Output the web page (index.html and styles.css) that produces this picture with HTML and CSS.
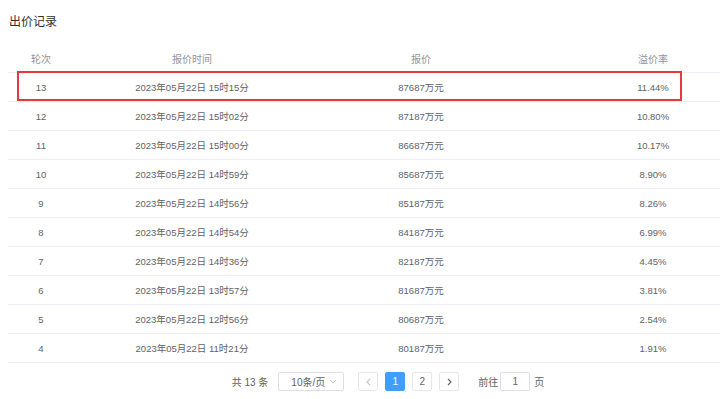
FILE: index.html
```html
<!DOCTYPE html>
<html lang="zh-CN">
<head>
    <meta charset="UTF-8">
    <title>出价记录</title>
    <link rel="stylesheet" href="styles.css">
</head>
<body>
    <div class="page">
        <h3 class="title">出价记录</h3>

        <div class="table-wrap">
            <table class="bid-table">
                <colgroup>
                    <col class="c-round">
                    <col class="c-time">
                    <col class="c-price">
                    <col class="c-rate">
                </colgroup>
                <thead>
                    <tr><th>轮次</th><th>报价时间</th><th>报价</th><th>溢价率</th></tr>
                </thead>
                <tbody>
                    <tr><td>13</td><td>2023年05月22日 15时15分</td><td>87687万元</td><td>11.44%</td></tr>
                    <tr><td>12</td><td>2023年05月22日 15时02分</td><td>87187万元</td><td>10.80%</td></tr>
                    <tr><td>11</td><td>2023年05月22日 15时00分</td><td>86687万元</td><td>10.17%</td></tr>
                    <tr><td>10</td><td>2023年05月22日 14时59分</td><td>85687万元</td><td>8.90%</td></tr>
                    <tr><td>9</td><td>2023年05月22日 14时56分</td><td>85187万元</td><td>8.26%</td></tr>
                    <tr><td>8</td><td>2023年05月22日 14时54分</td><td>84187万元</td><td>6.99%</td></tr>
                    <tr><td>7</td><td>2023年05月22日 14时36分</td><td>82187万元</td><td>4.45%</td></tr>
                    <tr><td>6</td><td>2023年05月22日 13时57分</td><td>81687万元</td><td>3.81%</td></tr>
                    <tr><td>5</td><td>2023年05月22日 12时56分</td><td>80687万元</td><td>2.54%</td></tr>
                    <tr><td>4</td><td>2023年05月22日 11时21分</td><td>80187万元</td><td>1.91%</td></tr>
                </tbody>
            </table>
            <div class="mark"></div>

            <div class="pager">
                <span class="total">共 13 条</span>
                <div class="sizes">
                    <span>10条/页</span>
                    <svg width="8" height="5" viewBox="0 0 8 5"><path d="M1 1l3 3 3-3" fill="none" stroke="#c0c4cc" stroke-width="1"/></svg>
                </div>
                <button class="btn prev">
                    <svg width="5" height="8" viewBox="0 0 5 8"><path d="M4 1L1 4l3 3" fill="none" stroke="#c0c4cc" stroke-width="1.1"/></svg>
                </button>
                <button class="btn num active">1</button>
                <button class="btn num">2</button>
                <button class="btn next">
                    <svg width="5" height="8" viewBox="0 0 5 8"><path d="M1 1l3 3-3 3" fill="none" stroke="#606266" stroke-width="1.1"/></svg>
                </button>
                <span class="jump">前往</span>
                <div class="jump-input">1</div>
                <span class="jump-unit">页</span>
            </div>
        </div>
    </div>
</body>
</html>
```

FILE: styles.css
```css
html, body {
    margin: 0;
    overflow: hidden;
}
body {
    font-family: 'Liberation Sans', 'Noto Sans CJK SC', sans-serif;
    color: #606266;
    background: #fff;
}
.page {
    padding: 14px 0 0 8px;
    width: 766px;
}
.title {
    margin: 0;
    font-size: 12px;
    line-height: 16px;
    font-weight: normal;
    color: #303133;
    padding-left: 1px;
}
.table-wrap {
    position: relative;
    margin-top: 14px;
}
.bid-table {
    width: 766px;
    border-collapse: collapse;
    table-layout: fixed;
    font-size: 9.5px;
}
.c-round { width: 66px; }
.c-time { width: 236px; }
.c-price { width: 222px; }
.c-rate { width: 242px; }
.bid-table th,
.bid-table td {
    height: 28px;
    padding: 0;
    text-align: center;
    border-bottom: 1px solid #ebeef5;
    font-weight: normal;
}
.bid-table th {
    color: #909399;
    font-size: 10px;
}
.mark {
    position: absolute;
    left: 9px;
    top: 27px;
    width: 661px;
    height: 26px;
    border: 2px solid #e8383d;
}
.pager {
    display: flex;
    align-items: center;
    justify-content: center;
    height: 19px;
    margin-top: 9px;
    font-size: 10px;
    padding-right: 6px;
}
.total {
    margin-right: 10px;
}
.sizes {
    box-sizing: border-box;
    width: 66px;
    height: 19px;
    border: 1px solid #dcdfe6;
    border-radius: 2px;
    display: flex;
    align-items: center;
    justify-content: space-between;
    padding: 0 6px 0 12px;
    margin-right: 14px;
}
.btn {
    box-sizing: border-box;
    width: 20px;
    height: 19px;
    padding: 0;
    margin-right: 7px;
    border: 1px solid #e4e7ed;
    border-radius: 2px;
    background: #fff;
    color: #606266;
    font-family: inherit;
    font-size: 10px;
    display: flex;
    align-items: center;
    justify-content: center;
}
.btn.active {
    background: #409eff;
    border-color: #409eff;
    color: #fff;
}
.btn.next {
    margin-right: 19px;
}
.jump {
    margin-right: 2px;
}
.jump-input {
    box-sizing: border-box;
    width: 30px;
    height: 19px;
    border: 1px solid #dcdfe6;
    border-radius: 2px;
    display: flex;
    align-items: center;
    justify-content: center;
    margin-right: 4px;
}
```
